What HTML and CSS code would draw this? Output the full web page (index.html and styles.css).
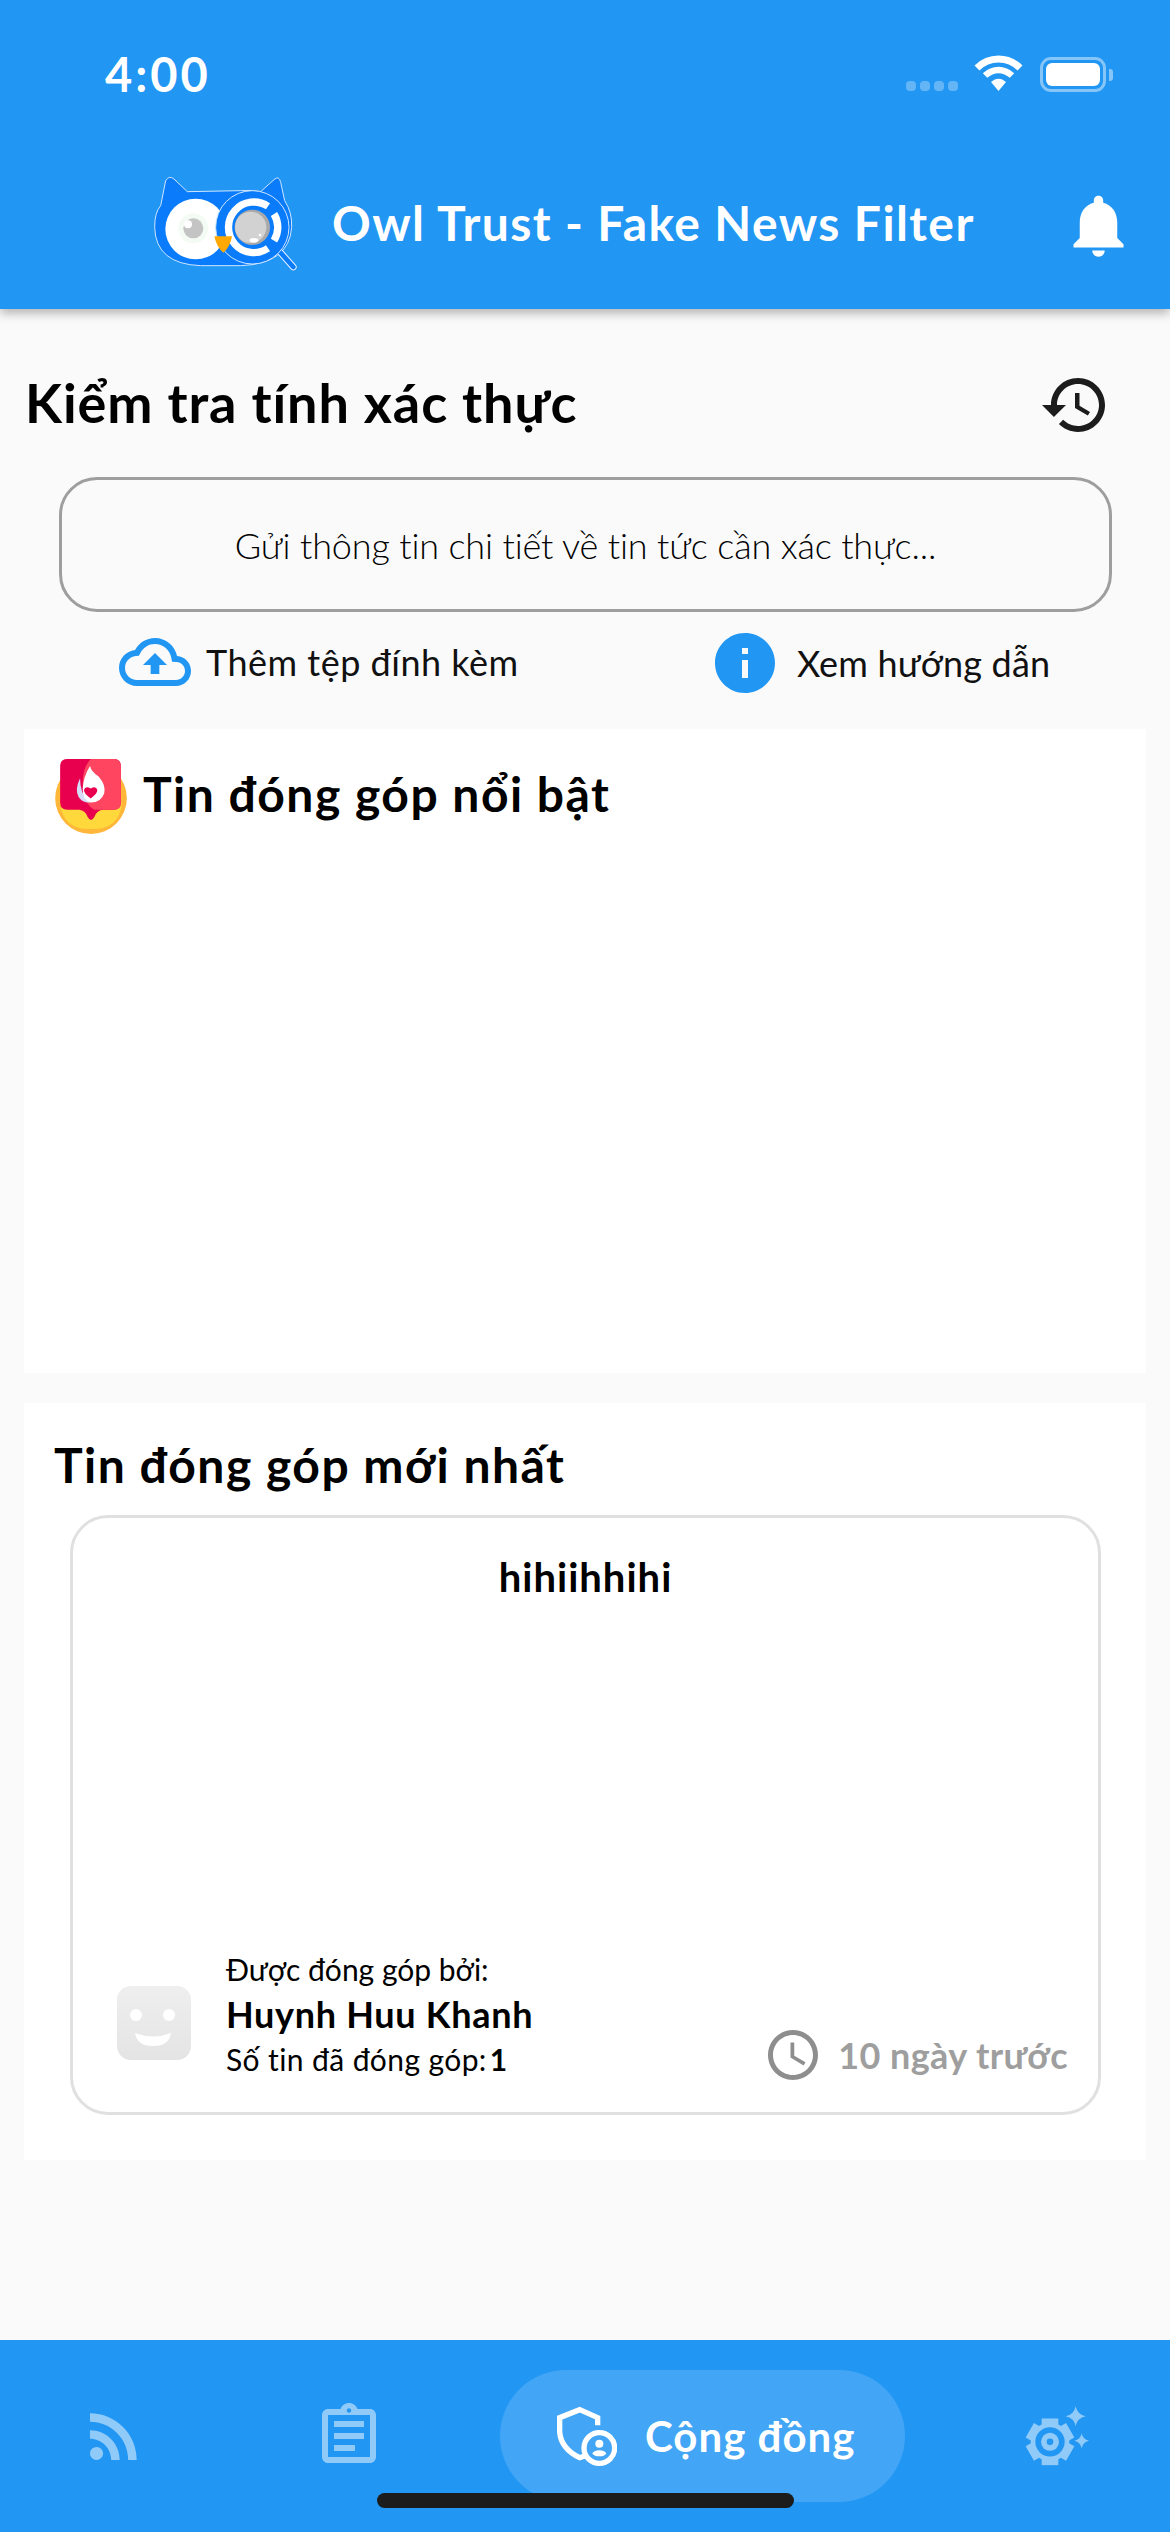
FILE: index.html
```html
<!DOCTYPE html>
<html lang="vi">

<head>
    <meta charset="UTF-8">
    <meta name="viewport" content="width=device-width, initial-scale=1.0">
    <title>Owl Trust</title>
    <link rel="stylesheet" href="styles.css">
</head>

<body>
    <div class="app">
        <!-- header -->
        <header class="header">
            <div class="status">
                <span class="time">4:00</span>
                <div class="status-icons">
                    <div class="signal"><i></i><i></i><i></i><i></i></div>
                    <svg class="wifi" viewBox="0 0 49 36">
                        <path d="M3 13 C15 1 34 1 46 13" fill="none" stroke="#fff" stroke-width="7" />
                        <path d="M11 20.500 C19 13 30 13 38 20.500" fill="none" stroke="#fff" stroke-width="6.500" />
                        <path d="M17 27 L24.500 36 L32 27 C27 22.500 22 22.500 17 27 Z" fill="#fff" />
                    </svg>
                    <div class="battery"><div class="battery-fill"></div></div>
                    <div class="battery-nub"></div>
                </div>
            </div>
            <div class="title-row">
                <svg class="logo" viewBox="68 78 436 294">
                    <path d="M105 95 Q115 78 130 90 L170 128 L330 125 Q360 122 390 128 L430 92 Q445 78 450 100 L462 155 Q485 190 483 235 Q475 345 330 350 L210 350 Q75 345 72 235 Q72 190 90 170 Z" fill="#0a7cfb" stroke="#cfe6ff" stroke-width="3" />
                    <circle cx="195" cy="240" r="91" fill="#fff" />
                    <circle cx="188" cy="238" r="45" fill="#f4fbf4" />
                    <circle cx="188" cy="238" r="30" fill="#c4c4c4" />
                    <circle cx="172" cy="226" r="12" fill="#fff" />
                    <path d="M440 300 L488 354" stroke="#e8f2ff" stroke-width="20" stroke-linecap="round" />
                    <path d="M440 300 L488 354" stroke="#0a7cfb" stroke-width="14" stroke-linecap="round" />
                    <circle cx="365" cy="235" r="110" fill="#0a7cfb" stroke="#cfe6ff" stroke-width="3" />
                    <path d="M412 172 A76 76 0 1 0 412 298" fill="none" stroke="#fff" stroke-width="22" />
                    <path d="M430 195 A76 76 0 0 1 430 275" fill="none" stroke="#fff" stroke-width="22" />
                    <circle cx="365" cy="235" r="53" fill="#a9a9a9" />
                    <circle cx="360" cy="235" r="47" fill="#d2d2d2" />
                    <ellipse cx="370" cy="274" rx="13" ry="7" fill="#fff" />
                    <circle cx="388" cy="258" r="4" fill="#fff" />
                    <path d="M251 262 L304 262 Q298 295 278 311 Q258 295 251 262 Z" fill="#ffa800" />
                </svg>
                <h1 class="app-title">Owl Trust - Fake News Filter</h1>
                <svg class="bell" viewBox="0 0 24 24">
                    <path fill="#fff" d="M12 22c1.100 0 2-.9 2-2h-4c0 1.100.89 2 2 2zm6-6v-5c0-3.070-1.640-5.640-4.500-6.320V4c0-.83-.67-1.500-1.500-1.500s-1.500.67-1.500 1.500v.68C7.630 5.360 6 7.920 6 11v5l-2 2v1h16v-1l-2-2z" />
                </svg>
            </div>
        </header>

        <main class="main">
            <!-- kiem tra -->
            <div class="check-head">
                <h2 class="check-title">Kiểm tra tính xác thực</h2>
                <svg class="icon-72" viewBox="0 0 24 24">
                    <path fill="#1c1c1c" d="M13 3c-4.970 0-9 4.030-9 9H1l3.890 3.890.07.14L9 12H6c0-3.870 3.130-7 7-7s7 3.130 7 7-3.130 7-7 7c-1.930 0-3.680-.79-4.940-2.060l-1.420 1.420C8.270 19.990 10.510 21 13 21c4.970 0 9-4.030 9-9s-4.030-9-9-9zm-1 5v5l4.280 2.540.72-1.210-3.500-2.080V8H12z" />
                </svg>
            </div>
            <div class="input-box">Gửi thông tin chi tiết về tin tức cần xác thực...</div>
            <div class="actions">
                <div class="action action-attach">
                    <svg class="icon-72" viewBox="0 0 24 24">
                        <path fill="#2196f3" d="M19.350 10.040C18.670 6.590 15.640 4 12 4 9.110 4 6.600 5.640 5.350 8.040 2.340 8.360 0 10.910 0 14c0 3.310 2.690 6 6 6h13c2.760 0 5-2.240 5-5 0-2.640-2.050-4.780-4.650-4.960zM19 18H6c-2.210 0-4-1.790-4-4 0-2.050 1.530-3.760 3.560-3.970l1.070-.11.5-.95C8.080 7.140 9.940 6 12 6c2.620 0 4.880 1.860 5.390 4.430l.3 1.500 1.530.11c1.560.1 2.780 1.410 2.780 2.960 0 1.650-1.350 3-3 3zM8 13h2.550v3h2.900v-3H16l-4-4z" />
                    </svg>
                    <span>Thêm tệp đính kèm</span>
                </div>
                <div class="action action-guide">
                    <svg class="icon-72" viewBox="0 0 24 24">
                        <path fill="#2196f3" d="M12 2C6.480 2 2 6.480 2 12s4.480 10 10 10 10-4.480 10-10S17.520 2 12 2zm1 15h-2v-6h2v6zm0-8h-2V7h2v2z" />
                    </svg>
                    <span>Xem hướng dẫn</span>
                </div>
            </div>

            <!-- noi bat -->
            <section class="card card-hot">
                <div class="card-head">
                    <svg class="hot-icon" viewBox="47 57 216 226">
                        <circle cx="155" cy="175" r="108" fill="#ffb739" />
                        <path d="M62 190 H248 Q240 270 155 268 Q70 270 62 190 Z" fill="#ffd93b" />
                        <path d="M84 57 H223 Q245 57 245 79 V188 Q245 210 223 210 H190 Q172 212 165 232 Q155 250 145 232 Q138 212 120 210 H84 Q62 210 62 188 V79 Q62 57 84 57 Z" fill="#e8004f" />
                        <path d="M155 57 H223 Q245 57 245 79 V188 Q245 210 223 210 H165 Q130 190 130 130 Q130 80 155 57 Z" fill="#ff4560" />
                        <path d="M122 115 Q105 150 118 172 Q135 195 165 185 Q135 180 128 155 Q122 135 122 115 Z" fill="#d6dcf8" />
                        <path d="M152 78 Q156 95 178 110 Q200 135 195 160 Q185 188 155 188 Q128 182 130 145 Q132 110 152 78 Z" fill="#fff" />
                        <path d="M154 176 Q132 160 134 150 Q138 136 154 146 Q170 136 174 150 Q176 160 154 176 Z" fill="#e8004f" />
                    </svg>
                    <h3 class="card-title">Tin đóng góp nổi bật</h3>
                </div>
            </section>

            <!-- moi nhat -->
            <section class="card card-new">
                <h3 class="card-title new-title">Tin đóng góp mới nhất</h3>
                <article class="post">
                    <p class="post-text">hihiihhihi</p>
                    <div class="post-foot">
                        <div class="author">
                            <svg class="avatar" viewBox="0 0 74 74">
                                <defs>
                                    <linearGradient id="ava" x1="0" y1="0" x2="0" y2="1">
                                        <stop offset="0" stop-color="#efefef" />
                                        <stop offset="1" stop-color="#e4e4e4" />
                                    </linearGradient>
                                </defs>
                                <rect width="74" height="74" rx="14" fill="url(#ava)" />
                                <ellipse cx="19" cy="29" rx="6" ry="6" fill="#fff" />
                                <ellipse cx="52" cy="29" rx="6" ry="6" fill="#fff" />
                                <path d="M18 47 Q36 54 54 47 Q52 60 36 60 Q20 60 18 47 Z" fill="#fff" />
                            </svg>
                            <div class="author-info">
                                <div class="author-label">Được đóng góp bởi:</div>
                                <div class="author-name">Huynh Huu Khanh</div>
                                <div class="author-count">Số tin đã đóng góp:<b>1</b></div>
                            </div>
                        </div>
                        <div class="post-time">
                            <svg class="clock" viewBox="0 0 24 24">
                                <path fill="#8e8e8e" d="M11.990 2C6.470 2 2 6.480 2 12s4.470 10 9.990 10C17.520 22 22 17.520 22 12S17.520 2 11.990 2zM12 20c-4.420 0-8-3.580-8-8s3.580-8 8-8 8 3.580 8 8-3.580 8-8 8zm.5-13H11v6l5.250 3.150.75-1.230-4.500-2.670z" />
                            </svg>
                            <span>10 ngày trước</span>
                        </div>
                    </div>
                </article>
            </section>
        </main>

        <!-- bottom nav -->
        <nav class="nav">
            <svg class="icon-72 nav-rss" viewBox="0 0 24 24">
                <circle cx="6.180" cy="17.820" r="2.180" fill="#90caf9" />
                <path fill="#90caf9" d="M4 4.440v2.830c7.030 0 12.730 5.700 12.730 12.730h2.830c0-8.590-6.970-15.560-15.560-15.560zm0 5.660v2.830c3.900 0 7.070 3.170 7.070 7.070h2.830c0-5.470-4.430-9.900-9.900-9.900z" />
            </svg>
            <svg class="icon-72 nav-list" viewBox="0 0 24 24">
                <path fill="#90caf9" d="M19 3h-4.180C14.400 1.840 13.300 1 12 1c-1.300 0-2.400.84-2.820 2H5c-1.100 0-2 .9-2 2v14c0 1.100.9 2 2 2h14c1.100 0 2-.9 2-2V5c0-1.100-.9-2-2-2zm-7-.25c.22 0 .41.1.55.25.12.13.2.31.2.5 0 .41-.34.75-.75.75s-.75-.34-.75-.75c0-.19.08-.37.2-.5.14-.15.33-.25.55-.25zM19 19H5V5h14v14zM7 15h7v2H7zm0-4h10v2H7zm0-4h10v2H7z" />
            </svg>
            <div class="nav-pill">
                <svg class="shield" viewBox="110 57 180 180">
                    <path d="M232 115 V92 L178 68 L118 92 V135 Q122 185 178 212 L196 206" fill="none" stroke="#fff" stroke-width="16" />
                    <circle cx="237" cy="183" r="46" fill="none" stroke="#fff" stroke-width="16" />
                    <circle cx="237" cy="170" r="12" fill="#fff" />
                    <ellipse cx="237" cy="199" rx="20" ry="9" fill="#fff" />
                </svg>
                <span>Cộng đồng</span>
            </div>
            <svg class="gear" viewBox="75 45 195 185">
                <rect x="125" y="85" width="50" height="140" fill="#90caf9" />
                <rect x="125" y="85" width="50" height="140" fill="#90caf9" transform="rotate(60 150 155)" />
                <rect x="125" y="85" width="50" height="140" fill="#90caf9" transform="rotate(120 150 155)" />
                <circle cx="150" cy="155" r="58" fill="#90caf9" />
                <circle cx="150" cy="155" r="44" fill="#2196f3" />
                <circle cx="150" cy="155" r="27" fill="#90caf9" />
                <circle cx="150" cy="155" r="10" fill="#2196f3" />
                <path d="M227 48 Q232 73 257 78 Q232 83 227 108 Q222 83 197 78 Q222 73 227 48 Z" fill="#90caf9" />
                <path d="M245 130 Q249 148 267 152 Q249 156 245 174 Q241 156 223 152 Q241 148 245 130 Z" fill="#90caf9" />
            </svg>
            <div class="home-bar"></div>
        </nav>
    </div>
</body>

</html>
```

FILE: styles.css
```css
* {
    box-sizing: border-box;
    margin: 0;
    padding: 0;
}

body {
    font-family: "Lato", "Noto Sans", sans-serif;
    background-color: #fafafa;
    color: #000;
}

.app {
    display: flex;
    flex-direction: column;
    width: 1170px;
    height: 2532px;
    overflow: hidden;
}

/* header */
.header {
    height: 309px;
    background-color: #2196f3;
    box-shadow: 0 4px 10px rgba(0, 0, 0, 0.3);
    color: #fff;
    position: relative;
    padding-top: 46px;
}

.status {
    display: flex;
    justify-content: space-between;
    align-items: center;
    height: 56px;
    padding: 0 57px 0 105px;
}

.time {
    font-size: 47px;
    font-weight: 700;
    letter-spacing: 3px;
}

.status-icons {
    display: flex;
    align-items: flex-end;
    margin-top: 4px;
}

.signal {
    display: flex;
    gap: 4px;
    margin-right: 16px;
    margin-bottom: 7px;
}

.signal i {
    display: block;
    width: 10px;
    height: 10px;
    border-radius: 4px;
    background-color: rgba(255, 255, 255, 0.3);
}

.wifi {
    width: 49px;
    height: 36px;
    margin-right: 17px;
    margin-bottom: 7px;
}

.battery {
    width: 66px;
    height: 35px;
    padding: 3px;
    border: 3px solid rgba(255, 255, 255, 0.45);
    border-radius: 11px;
    margin-bottom: 6px;
}

.battery-fill {
    height: 100%;
    border-radius: 6px;
    background-color: #fff;
}

.battery-nub {
    width: 4px;
    height: 12px;
    margin: 0 0 17px 3px;
    border-radius: 0 3px 3px 0;
    background-color: rgba(255, 255, 255, 0.45);
}

.title-row {
    display: flex;
    align-items: center;
    height: 96px;
    margin-top: 74px;
    padding-left: 153px;
}

.logo {
    width: 146px;
    height: 98px;
    flex: none;
}

.app-title {
    font-size: 48px;
    font-weight: 700;
    letter-spacing: 1.4px;
    margin-left: 33px;
    margin-bottom: 3px;
    white-space: nowrap;
}

.bell {
    position: absolute;
    left: 1061px;
    top: 188px;
    width: 75px;
    height: 75px;
}

.icon-72 {
    width: 72px;
    height: 72px;
    flex: none;
}

/* main */
.main {
    flex: 1;
    padding-top: 60px;
}

.check-head {
    display: flex;
    justify-content: space-between;
    align-items: center;
    padding: 0 59px 0 25px;
}

.check-title {
    font-size: 54px;
    font-weight: 700;
    letter-spacing: 0.9px;
    margin-bottom: 5px;
}

.input-box {
    display: flex;
    align-items: center;
    justify-content: center;
    height: 135px;
    margin: 36px 58px 15px 59px;
    border: 3px solid #9e9e9e;
    border-radius: 38px;
    font-size: 36px;
    font-weight: 300;
    letter-spacing: -0.15px;
    color: #000;
}

.actions {
    display: flex;
    height: 72px;
}

.action {
    display: flex;
    align-items: center;
    font-size: 36px;
    color: #111;
    padding-bottom: 2px;
}

.action-attach {
    margin-left: 119px;
    gap: 15px;
    letter-spacing: 0.5px;
}

.action-guide {
    position: absolute;
    left: 709px;
    gap: 16px;
    letter-spacing: 0.2px;
}

.card {
    margin: 30px 24px 0;
    background-color: #fff;
}

.card-hot {
    height: 644px;
    padding: 30px 0 0 31px;
}

.card-head {
    display: flex;
    align-items: center;
    gap: 16px;
}

.hot-icon {
    width: 72px;
    height: 75px;
}

.card-title {
    font-size: 48px;
    font-weight: 700;
    letter-spacing: 1.5px;
}

.card-head .card-title {
    margin-bottom: 6px;
}

.card-new {
    height: 757px;
    padding-top: 32px;
}

.new-title {
    line-height: 60px;
    margin-left: 30px;
}

.post {
    display: flex;
    flex-direction: column;
    justify-content: space-between;
    height: 600px;
    margin: 20px 45px 0 46px;
    padding-top: 34px;
    border: 3px solid #e0e0e0;
    border-radius: 38px;
}

.post-text {
    text-align: center;
    font-size: 40px;
    font-weight: 700;
    letter-spacing: 1px;
    line-height: 50px;
}

.post-foot {
    display: flex;
    justify-content: space-between;
    align-items: flex-end;
    padding: 0 30px 24px 44px;
}

.author {
    display: flex;
    align-items: flex-start;
    gap: 35px;
}

.avatar {
    width: 74px;
    height: 74px;
    margin-top: 37px;
}

.author-info {
    margin-bottom: 9px;
}

.author-label,
.author-count {
    font-size: 30px;
    line-height: 40px;
}

.author-count {
    letter-spacing: 0.4px;
}

.author-count b {
    margin-left: 3px;
}

.author-name {
    font-size: 36px;
    font-weight: 700;
    letter-spacing: 0.7px;
    line-height: 50px;
}

.post-time {
    display: flex;
    align-items: center;
    gap: 15px;
    font-size: 36px;
    font-weight: 700;
    letter-spacing: 0.4px;
    color: #9e9e9e;
    margin-bottom: 3px;
}

.clock {
    width: 60px;
    height: 60px;
}

/* bottom nav */
.nav {
    display: flex;
    align-items: flex-start;
    position: relative;
    height: 192px;
    padding: 30px 0 0 78px;
    background-color: #2196f3;
}

.nav-rss {
    margin-top: 30px;
}

.nav-list {
    margin: 30px 0 0 163px;
}

.nav-pill {
    display: flex;
    align-items: center;
    gap: 28px;
    width: 405px;
    height: 132px;
    margin-left: 115px;
    padding-left: 57px;
    border-radius: 66px;
    background-color: #42a5f5;
    color: #fff;
    font-size: 42px;
    font-weight: 700;
    letter-spacing: 1px;
}

.shield {
    width: 60px;
    height: 60px;
}

.gear {
    width: 65px;
    height: 62px;
    margin: 35px 0 0 120px;
}

.home-bar {
    position: absolute;
    left: 377px;
    top: 153px;
    width: 417px;
    height: 15px;
    border-radius: 8px;
    background-color: #1c1c1c;
}
```
